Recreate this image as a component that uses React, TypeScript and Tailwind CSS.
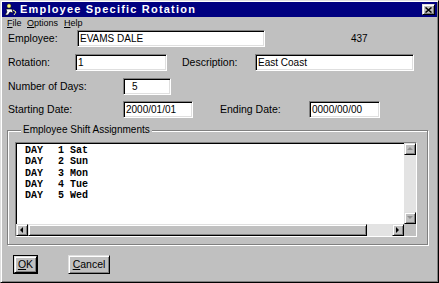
import React from "react";

const raised =
  "border border-t-[#dfdfdf] border-l-[#dfdfdf] border-r-black border-b-black shadow-[inset_1px_1px_0_#ffffff,inset_-1px_-1px_0_#808080] bg-[#c0c0c0]";
const sunken =
  "border border-t-[#808080] border-l-[#808080] border-r-white border-b-white shadow-[inset_1px_1px_0_#000000,inset_-1px_-1px_0_#dfdfdf] bg-white";

function Field({ w, text, pl }: { w: string; text: string; pl?: string }) {
  return (
    <div className={`${sunken} ${w} h-[17px] flex items-center ${pl ?? "pl-[2px]"} text-[10px] leading-none`}>
      {text}
    </div>
  );
}

function Arrow({ dir, color }: { dir: "up" | "down" | "left" | "right"; color: string }) {
  const pts: Record<string, string> = {
    up: "1,5 4,2 7,5",
    down: "1,2 4,5 7,2",
    left: "5,1 2,4 5,7",
    right: "2,1 5,4 2,7",
  };
  return (
    <svg width="8" height="8" viewBox="0 0 8 8">
      <polygon points={pts[dir]} fill={color} />
    </svg>
  );
}

const rows = [
  ["1", "Sat"],
  ["2", "Sun"],
  ["3", "Mon"],
  ["4", "Tue"],
  ["5", "Wed"],
];

export default function App() {
  return (
    <div className="w-[439px] h-[283px] bg-[#c0c0c0] border border-t-[#dfdfdf] border-l-[#dfdfdf] border-r-black border-b-black shadow-[inset_1px_1px_0_#ffffff,inset_-1px_-1px_0_#808080] p-[1px] flex flex-col font-['Liberation_Sans',Arial,sans-serif] text-black overflow-hidden">
      {/* Title bar */}
      <div className="h-[15px] bg-[#000080] flex items-center pl-[1px] pr-[2px]">
        <svg width="14" height="13" viewBox="0 0 14 13">
          <rect x="0" y="0" width="14" height="13" fill="#000080" />
          <circle cx="6" cy="3" r="2.2" fill="#ffff80" stroke="#000" strokeWidth="0.6" />
          <path d="M3 6 L9 6 L10 10 L7 9 L5 12 L2 12 L4 9 Z" fill="#ffffff" stroke="#000" strokeWidth="0.6" />
          <path d="M10 7 L13 9 L11 12" fill="none" stroke="#ffff80" strokeWidth="1" />
        </svg>
        <span className="ml-[3px] text-white font-bold text-[11px] tracking-[1.2px] leading-none">
          Employee Specific Rotation
        </span>
        <div className="flex-1" />
        <div className={`${raised} w-[13px] h-[11px] flex items-center justify-center`}>
          <svg width="7" height="6" viewBox="0 0 7 6">
            <path d="M0.5 0.5 L6.5 5.5 M6.5 0.5 L0.5 5.5" stroke="#000" strokeWidth="1.5" />
          </svg>
        </div>
      </div>

      {/* Menu bar */}
      <div className="h-[12px] flex items-center text-[9px] leading-none pl-[5px]">
        <span className="w-[20px]">
          <span className="underline">F</span>ile
        </span>
        <span className="w-[37px]">
          <span className="underline">O</span>ptions
        </span>
        <span>
          <span className="underline">H</span>elp
        </span>
      </div>

      {/* Fields */}
      <div className="pl-[6px] text-[10.5px] leading-none">
        <div className="flex items-center mt-[1px]">
          <span className="w-[69px]">Employee:</span>
          <Field w="w-[188px]" text="EVAMS DALE" />
          <span className="ml-[86px] text-[10px]">437</span>
        </div>
        <div className="flex items-center mt-[7px]">
          <span className="w-[67px]">Rotation:</span>
          <Field w="w-[92px]" text="1" />
          <span className="ml-[15px] w-[73px]">Description:</span>
          <Field w="w-[159px]" text="East Coast" />
        </div>
        <div className="flex items-center mt-[7px]">
          <span className="w-[115px]">Number of Days:</span>
          <Field w="w-[48px]" text="5" pl="pl-[8px]" />
        </div>
        <div className="flex items-center mt-[6px]">
          <span className="w-[115px]">Starting Date:</span>
          <Field w="w-[70px]" text="2000/01/01" />
          <span className="ml-[27px] w-[89px]">Ending Date:</span>
          <Field w="w-[71px]" text="0000/00/00" />
        </div>
      </div>

      {/* Group box */}
      <fieldset className="ml-[5px] mt-[6px] w-[421px] border border-[#808080] shadow-[1px_1px_0_#ffffff,inset_1px_1px_0_#ffffff] pl-[7px] pr-[10px] pt-[6px] pb-[7px]">
        <legend className="ml-[6px] px-[2px] text-[10px] leading-[12px] bg-[#c0c0c0]">
          Employee Shift Assignments
        </legend>
        <div className={`${sunken} w-[402px] h-[95px] flex flex-col`}>
          <div className="flex flex-1 min-h-0">
            <div className="flex-1 pl-[9px] pt-[2px] font-['Liberation_Mono',monospace] font-bold text-[10px] leading-[11.25px] whitespace-pre">
              {rows.map(([n, d]) => (
                <div key={n} className="flex">
                  <span className="w-[33px]">DAY</span>
                  <span>{n} {d}</span>
                </div>
              ))}
            </div>
            <div className="w-[12px] flex flex-col bg-[#e3e3e3]">
              <div className={`${raised} h-[12px] flex items-center justify-center`}>
                <Arrow dir="up" color="#909090" />
              </div>
              <div className="flex-1" />
              <div className={`${raised} h-[12px] flex items-center justify-center`}>
                <Arrow dir="down" color="#909090" />
              </div>
            </div>
          </div>
          <div className="h-[12px] flex">
            <div className={`${raised} w-[12px] flex items-center justify-center`}>
              <Arrow dir="left" color="#000" />
            </div>
            <div className={`${raised} w-[339px]`} />
            <div className="flex-1 bg-[#e3e3e3]" />
            <div className={`${raised} w-[12px] flex items-center justify-center`}>
              <Arrow dir="right" color="#000" />
            </div>
            <div className="w-[12px] bg-[#c0c0c0]" />
          </div>
        </div>
      </fieldset>

      {/* Buttons */}
      <div className="flex mt-[10px] pl-[11px] text-[10.5px] leading-none">
        <div className="border border-black">
          <div className={`${raised} w-[23px] h-[17px] flex items-center justify-center`}>
            <span>
              <span className="underline">O</span>K
            </span>
          </div>
        </div>
        <div className={`${raised} ml-[30px] w-[42px] h-[19px] flex items-center justify-center`}>
          <span>
            <span className="underline">C</span>ancel
          </span>
        </div>
      </div>
    </div>
  );
}
